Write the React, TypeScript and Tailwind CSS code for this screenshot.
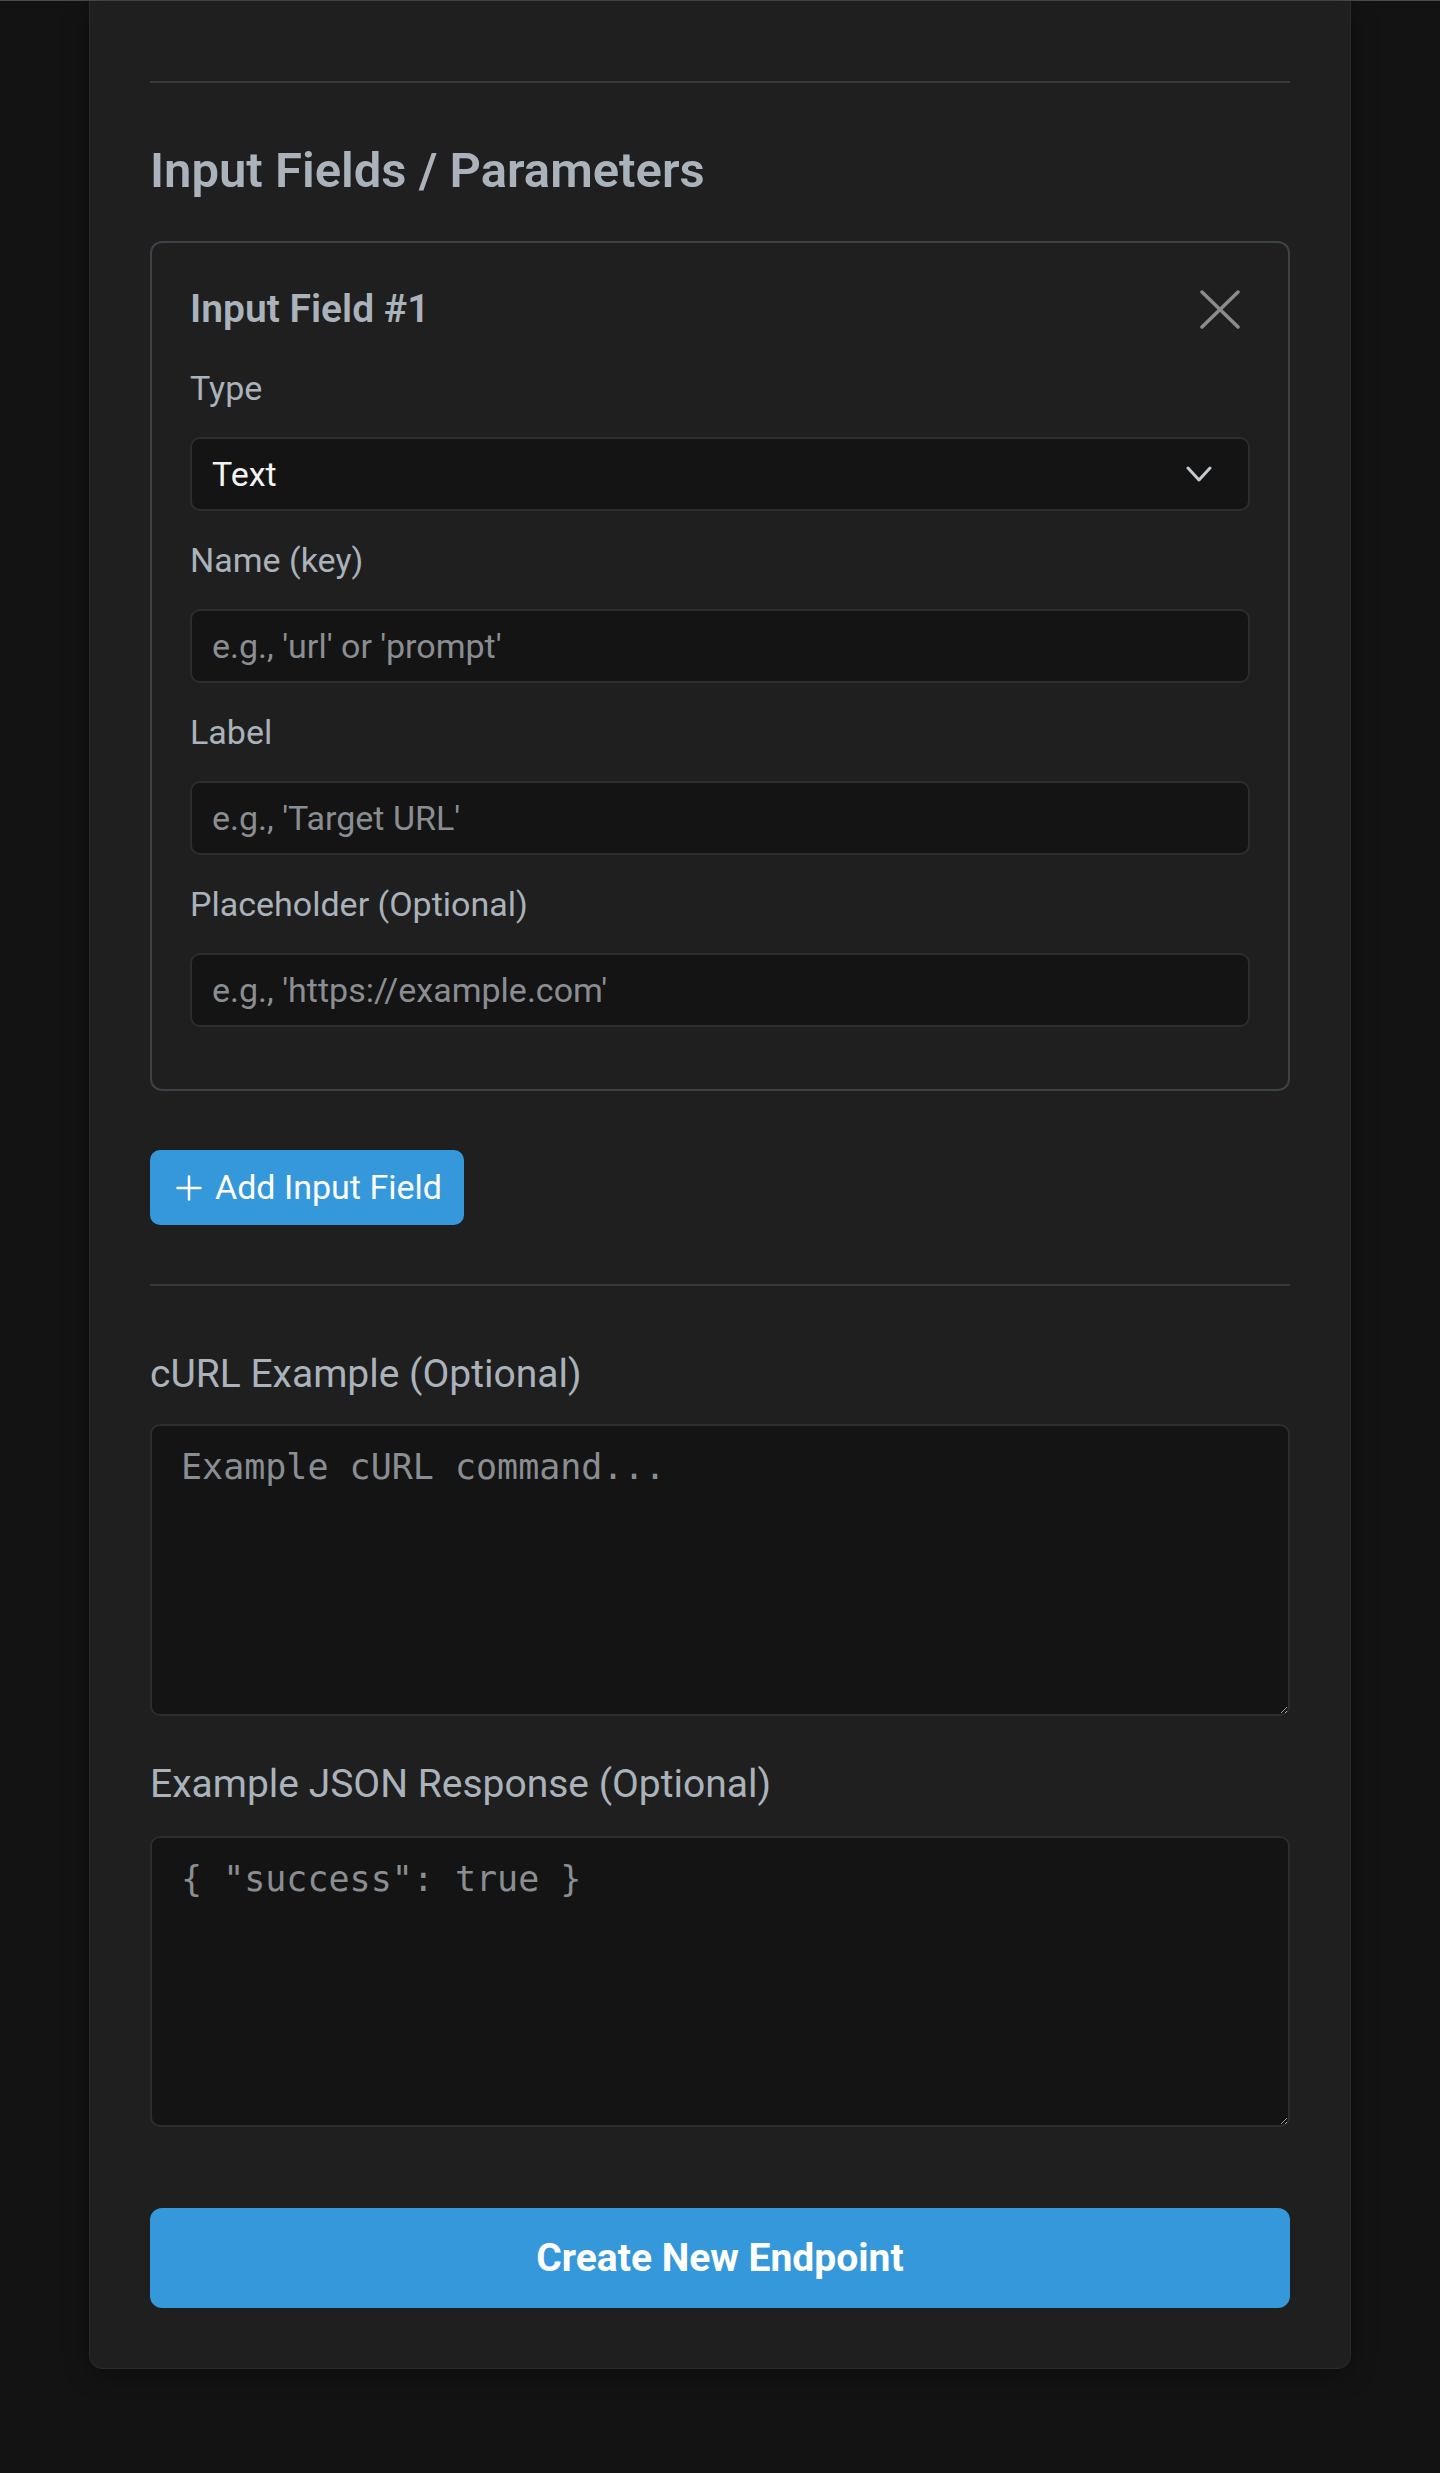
import { useState } from "react";

const fields = [
  { label: "Name (key)", placeholder: "e.g., 'url' or 'prompt'" },
  { label: "Label", placeholder: "e.g., 'Target URL'" },
  { label: "Placeholder (Optional)", placeholder: "e.g., 'https://example.com'" },
];

export default function App() {
  const [type, setType] = useState("text");

  return (
    <div className="min-h-screen bg-[#131313] border-t border-[#4a4a4a] font-['Roboto',sans-serif]">
      <div className="mx-auto w-[1262px] bg-[#1f1f1f] border-x border-b border-[#2b2b2b] rounded-b-[14px] px-[60px] pt-[80px] pb-[60px] shadow-[0_6px_24px_rgba(0,0,0,0.35)]">
        <div className="h-[2px] bg-[#383838]" />

        {/* Input fields section */}
        <h2 className="mt-[60px] text-[49px] leading-[56px] font-semibold text-[#aab2bb]">
          Input Fields / Parameters
        </h2>

        <div className="mt-[42px] rounded-[12px] border-2 border-[#3d4247] px-[38px] pt-[38px] pb-[38px]">
          <div className="flex items-center justify-between h-[57px] mb-[25px]">
            <h3 className="text-[39px] leading-[57px] font-semibold text-[#aab2bb]">
              Input Field #1
            </h3>
            <button className="mr-[10px] text-[#8c8c8c]" aria-label="Remove field">
              <svg width="40" height="39" viewBox="0 0 40 39" fill="none" stroke="currentColor" strokeWidth="3.5" strokeLinecap="round">
                <path d="M2 2 L38 37" />
                <path d="M38 2 L2 37" />
              </svg>
            </button>
          </div>

          <div className="mb-[24px]">
            <label className="block text-[34px] leading-[51px] text-[#aab2bb] mb-[23px]">Type</label>
            <div className="relative">
              <select
                value={type}
                onChange={(e) => setType(e.target.value)}
                className="block w-full h-[74px] appearance-none rounded-[10px] border-2 border-[#2d2d2d] bg-[#141414] px-[20px] text-[34px] text-[#f2f2f2] outline-none"
              >
                <option value="text">Text</option>
                <option value="number">Number</option>
                <option value="url">URL</option>
              </select>
              <svg
                className="pointer-events-none absolute right-[38px] top-1/2 -translate-y-1/2 text-[#c5cad0]"
                width="26"
                height="16"
                viewBox="0 0 26 16"
                fill="none"
                stroke="currentColor"
                strokeWidth="3"
                strokeLinecap="round"
                strokeLinejoin="round"
              >
                <path d="M2 2 L13 14 L24 2" />
              </svg>
            </div>
          </div>

          {fields.map((f) => (
            <div key={f.label} className="mb-[24px]">
              <label className="block text-[34px] leading-[51px] text-[#aab2bb] mb-[23px]">{f.label}</label>
              <input
                type="text"
                placeholder={f.placeholder}
                className="block w-full h-[74px] rounded-[10px] border-2 border-[#2d2d2d] bg-[#141414] px-[20px] text-[34px] text-[#f2f2f2] placeholder:text-[#8a8e93] outline-none"
              />
            </div>
          ))}
        </div>

        <button className="mt-[59px] flex h-[75px] items-center gap-[13px] rounded-[10px] bg-[#3498db] pl-[26px] pr-[22px] text-[34px] text-white">
          <svg width="26" height="26" viewBox="0 0 26 26" fill="none" stroke="currentColor" strokeWidth="2.5" strokeLinecap="round">
            <path d="M13 1.5 V24.5" />
            <path d="M1.5 13 H24.5" />
          </svg>
          Add Input Field
        </button>

        <div className="mt-[59px] h-[2px] bg-[#383838]" />

        {/* Examples */}
        <label className="mt-[60px] block text-[39px] leading-[57px] text-[#aab2bb] mb-[21px]">
          cURL Example (Optional)
        </label>
        <textarea
          placeholder="Example cURL command..."
          className="block w-full h-[292px] rounded-[10px] border-2 border-[#2d2d2d] bg-[#141414] pl-[29px] pr-[20px] pt-[15px] font-['DejaVu_Sans_Mono',monospace] text-[35px] leading-[1.5] text-[#e5e5e5] placeholder:text-[#8a8e93] outline-none"
        />

        <label className="mt-[40px] block text-[39px] leading-[57px] text-[#aab2bb] mb-[23px]">
          Example JSON Response (Optional)
        </label>
        <textarea
          placeholder={'{ "success": true }'}
          className="block w-full h-[291px] rounded-[10px] border-2 border-[#2d2d2d] bg-[#141414] pl-[29px] pr-[20px] pt-[15px] font-['DejaVu_Sans_Mono',monospace] text-[35px] leading-[1.5] text-[#e5e5e5] placeholder:text-[#8a8e93] outline-none"
        />

        <button className="mt-[81px] flex h-[100px] w-full items-center justify-center rounded-[12px] bg-[#3498db] text-[39px] font-bold text-white">
          Create New Endpoint
        </button>
      </div>
    </div>
  );
}
